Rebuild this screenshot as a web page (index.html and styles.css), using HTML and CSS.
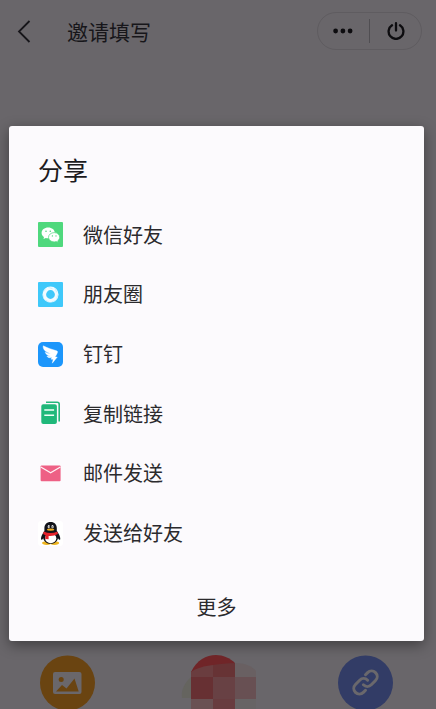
FILE: index.html
```
<!DOCTYPE html>
<html lang="zh-CN">
<head>
<meta charset="utf-8">
<meta name="viewport" content="width=device-width, initial-scale=1">
<title>邀请填写</title>
<link rel="stylesheet" href="styles.css">
</head>
<body>
<header class="topbar">
  <button class="back" aria-label="返回">
    <svg width="14" height="24" viewBox="0 0 14 24"><path d="M12.500 2 2 12.500l10.500 10.500" fill="none" stroke="#17161a" stroke-width="1.800"/></svg>
  </button>
  <h1 class="page-title">邀请填写</h1>
  <div class="capsule">
    <button class="capsule-button" aria-label="菜单">
      <svg width="22" height="6" viewBox="0 0 22 6" fill="#0d0c0f"><circle cx="2.600" cy="3" r="2.400"/><circle cx="9.900" cy="3" r="2.400"/><circle cx="17.100" cy="3" r="2.400"/></svg>
    </button>
    <button class="capsule-button" aria-label="关闭">
      <svg width="18" height="18" viewBox="0 0 18 18" fill="none" stroke="#0d0c0f" stroke-width="2.300" stroke-linecap="round"><path d="M5 3.300a7.400 7.400 0 1 0 8 0M9 1.200v7.300"/></svg>
    </button>
  </div>
</header>

<main class="dialog-area">
  <section class="dialog" role="dialog" aria-labelledby="share-title">
    <h2 class="dialog-title" id="share-title">分享</h2>
    <ul class="share-list">
      <li><button class="share-item">
        <svg class="share-icon" viewBox="0 0 25 25"><rect width="25" height="25" rx="1" fill="#4fd87d"/><path d="M10.200 5.500c-3.700 0-6.600 2.400-6.600 5.400 0 1.700.9 3.200 2.400 4.200l-.5 2 2.300-1.200c.8.200 1.600.3 2.400.3 3.700 0 6.600-2.400 6.600-5.300 0-3-2.900-5.400-6.600-5.400Z" fill="#fff"/><path d="M16.200 10.600c-3.200 0-5.700 2.100-5.700 4.700s2.500 4.600 5.700 4.600c.7 0 1.400-.1 2-.3l2 1-.5-1.700c1.200-.9 2-2.200 2-3.600 0-2.600-2.400-4.700-5.500-4.700Z" fill="#fff" stroke="#4fd87d" stroke-width=".7"/><g fill="#4fd87d"><circle cx="8" cy="9.300" r=".8"/><circle cx="12.300" cy="9.300" r=".8"/><circle cx="14.400" cy="13.900" r=".7"/><circle cx="18" cy="13.900" r=".7"/></g></svg>
        <span>微信好友</span></button></li>
      <li><button class="share-item">
        <svg class="share-icon" viewBox="0 0 25 25"><rect width="25" height="25" rx="1" fill="#3fc8fa"/><circle cx="12.500" cy="12.500" r="6.200" fill="none" stroke="#f2fbff" stroke-width="3.600"/><path d="m10.300 5.300 4.300 1.500m2.300-.6 1.900 4.200m1.300 2-1.500 4.300m-.8 2-4 1m-2.400.7-3.600-2.300m-2.100-1.500-.8-4m-.1-2.500 2.800-3.200" stroke="#b5ebfd" stroke-width=".6"/></svg>
        <span>朋友圈</span></button></li>
      <li><button class="share-item">
        <svg class="share-icon" viewBox="0 0 25 25"><rect width="25" height="25" rx="5" fill="#1c96fb"/><path d="M5.200 3.800c4.400 2.300 9.400 3.700 13.300 5 1 .4 1.300 1 .9 1.900-.6 1.600-1.500 3-2.400 4.300h2.300l-5 6.200.9-4h-2.100l.8-1.600c-2.300.4-4 .1-5-1.400 1.300.2 2.500.2 3.700-.1-2.800-.5-4.800-1.700-5.400-3.900 1.700.8 3.500 1.200 5.500 1.300C8.800 10.300 4.700 8.500 5.200 3.800Z" fill="#fff" stroke="#fff" stroke-width=".4"/></svg>
        <span>钉钉</span></button></li>
      <li><button class="share-item">
        <svg class="share-icon" viewBox="0 0 25 25"><path d="M8 1.300h11.200a2 2 0 0 1 2 2v17.200" fill="none" stroke="#24b87c" stroke-width="1.600"/><path d="M5.300 3.300h11.600a2 2 0 0 1 2 2V21a2 2 0 0 1-2 2H5.300a2 2 0 0 1-2-2V5.300a2 2 0 0 1 2-2Z" fill="#20b87a"/><path d="M6.300 9h9.800M6.300 14.200h9.800" stroke="#effff7" stroke-width="1.500"/></svg>
        <span>复制链接</span></button></li>
      <li><button class="share-item">
        <svg class="share-icon" viewBox="0 0 25 25"><rect x="2.600" y="4.500" width="20" height="15.700" rx="1" fill="#ee6085"/><path d="m2.800 6 9.800 5.800L22.400 6" fill="none" stroke="#fff1f5" stroke-width="1.300"/></svg>
        <span>邮件发送</span></button></li>
      <li><button class="share-item">
        <svg class="share-icon" viewBox="0 0 25 25"><rect width="25" height="25" rx="3" fill="#fff"/><ellipse cx="8.700" cy="22.100" rx="4.600" ry="1.800" fill="#efb51f"/><ellipse cx="16.500" cy="22.100" rx="4.600" ry="1.800" fill="#efb51f"/><path d="M12.600 1c-4 0-6.200 2.700-6.200 6.200v2.900C4.600 12.600 2.900 15.700 3 18c.1 1.200 1.200.9 2.200-.8.8 3.500 3.600 5.500 7.400 5.500s6.600-2 7.400-5.500c1 1.700 2.200 2 2.300.8.100-2.300-1.600-5.400-3.500-7.900V7.200c0-3.500-2.200-6.200-6.200-6.200Z" fill="#11131a"/><ellipse cx="12.700" cy="17.200" rx="5.600" ry="5" fill="#fff"/><ellipse cx="10.800" cy="5.700" rx="1.100" ry="1.600" fill="#fff"/><ellipse cx="14.500" cy="5.700" rx="1.100" ry="1.600" fill="#fff"/><circle cx="11.100" cy="5.900" r=".6"/><circle cx="14.200" cy="5.900" r=".6"/><ellipse cx="12.600" cy="8.600" rx="3.700" ry="1.200" fill="#efad20"/><path d="M5.800 10.500c4.400 2 9.200 2 13.600 0l.5 2.600c-2.800 1.600-6 2.100-9.300 1.800v3.400l-3.400-.4.300-3.700-2.400-1.300Z" fill="#e5222b"/></svg>
        <span>发送给好友</span></button></li>
    </ul>
    <button class="more">更多</button>
  </section>
</main>

<footer class="actions">
  <button class="action" aria-label="图片">
    <svg width="55" height="55" viewBox="0 0 55 55"><circle cx="27.500" cy="28" r="27.500" fill="#6a4411"/><rect x="13" y="17" width="28.500" height="22" rx="2" fill="#6a676b"/><circle cx="21.200" cy="24.500" r="2.500" fill="#6a4411"/><path d="m16 36.500 6-6.500 4.500 3.500 8-10 4.200 13Z" fill="#6a4411"/></svg>
  </button>
  <button class="action" aria-label="海报">
    <svg width="79" height="55" viewBox="0 0 79 55"><path d="M14 22C6 29 4 37 5 43h9Z" fill="#65645f"/><path d="M14 17C20 5 29 0 39 0c7 0 14 3 19 8v12H14Z" fill="#702528"/><path d="M14 17c6-4 13-6 22-7v12H14Z" fill="#6a3d3f"/><path d="M36 10c7-1 14-2 22-2v14H36Z" fill="#673335"/><path d="M58 8c10 0 17 3 21 8v6H58Z" fill="#696062"/><path d="M14 22h22v22H14Z" fill="#673033"/><path d="M36 22h22v22H36Z" fill="#684144"/><path d="M58 22h21v22H58Z" fill="#685053"/><path d="M14 44h22v11H14Z" fill="#6a5153"/><path d="M36 44h22v11H36Z" fill="#683c3f"/><path d="M58 44h21v11H58Z" fill="#676465"/></svg>
  </button>
  <button class="action" aria-label="链接">
    <svg width="55" height="55" viewBox="0 0 55 55"><circle cx="27.500" cy="28" r="27.500" fill="#323c66"/><g transform="rotate(-45 27.500 27.500)" fill="none" stroke="#6a686c" stroke-width="3" stroke-linecap="round"><path d="M22 33h-3a5.600 5.600 0 0 1 0-11.200h6a5.600 5.600 0 0 1 5.600 5.600"/><path d="M33 22h3a5.600 5.600 0 0 1 0 11.200h-6a5.600 5.600 0 0 1-5.600-5.600"/></g></svg>
  </button>
</footer>
</body>
</html>
```
FILE: styles.css
```
* {
  box-sizing: border-box;
}

body {
  display: flex;
  flex-direction: column;
  height: 100vh;
  margin: 0;
  overflow: hidden;
  background: #69666a;
  color: #2b2a2d;
  font-family: "Noto Sans CJK SC", sans-serif;
}

button {
  margin: 0;
  padding: 0;
  border: 0;
  background: none;
  color: inherit;
  font: inherit;
  cursor: pointer;
}

svg {
  display: block;
  flex: none;
}

.topbar {
  display: flex;
  flex: none;
  align-items: center;
  height: 62px;
  padding: 0 14px 0 17px;
}

.page-title {
  flex: 1;
  margin: 0 0 0 36px;
  color: #17161a;
  font-size: 21px;
  font-weight: 400;
  line-height: 30px;
}

.capsule {
  display: flex;
  align-items: center;
  width: 105px;
  height: 38px;
  border: 1px solid #5f5c60;
  border-radius: 19px;
}

.capsule-button {
  display: flex;
  flex: 1;
  align-items: center;
  justify-content: center;
  height: 24px;
}

.capsule-button + .capsule-button {
  border-left: 1px solid #504e52;
}

.dialog-area {
  flex: 1;
  padding: 64px 12px 0 9px;
}

.dialog {
  display: flex;
  flex-direction: column;
  padding-bottom: 10px;
  border-radius: 3px;
  background: #fcfafd;
  box-shadow: 0 4px 14px rgba(0, 0, 0, 0.4);
}

.dialog-title {
  margin: 0;
  padding: 25px 29px 18px;
  color: #1c1b1e;
  font-size: 25px;
  font-weight: 400;
  line-height: 36px;
}

.share-list {
  display: grid;
  grid-auto-rows: 1fr;
  height: 358px;
  margin: 0;
  padding: 0;
  list-style: none;
}

.share-item {
  display: flex;
  align-items: center;
  gap: 20px;
  width: 100%;
  height: 100%;
  padding: 0 29px;
  font-size: 20px;
  line-height: 30px;
}

.share-icon {
  width: 25px;
  height: 25px;
}

.more {
  align-self: center;
  margin-top: 20px;
  padding: 0 20px;
  font-size: 20px;
  line-height: 48px;
}

.actions {
  display: flex;
  flex: none;
  justify-content: space-between;
  height: 54px;
  padding: 0 43px 0 40px;
}

.action {
  height: 55px;
}
```
